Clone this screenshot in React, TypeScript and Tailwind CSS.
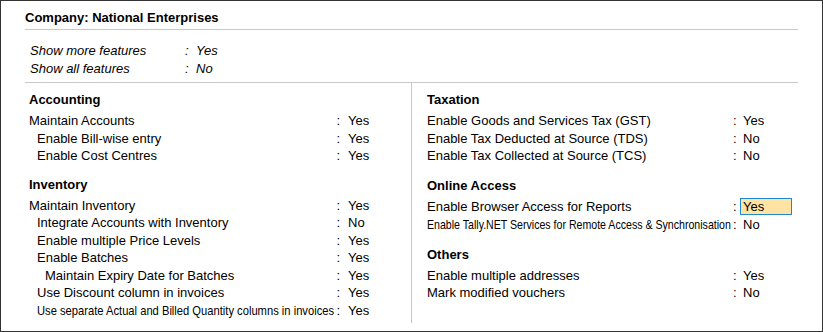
import React from 'react';

type Row = { label: string; value: string; indent?: number; squeeze?: string; active?: boolean };
type Section = { title: string; rows: Row[] };

const LEFT: Section[] = [
  {
    title: 'Accounting',
    rows: [
      { label: 'Maintain Accounts', value: 'Yes' },
      { label: 'Enable Bill-wise entry', value: 'Yes', indent: 1 },
      { label: 'Enable Cost Centres', value: 'Yes', indent: 1 },
    ],
  },
  {
    title: 'Inventory',
    rows: [
      { label: 'Maintain Inventory', value: 'Yes' },
      { label: 'Integrate Accounts with Inventory', value: 'No', indent: 1 },
      { label: 'Enable multiple Price Levels', value: 'Yes', indent: 1 },
      { label: 'Enable Batches', value: 'Yes', indent: 1 },
      { label: 'Maintain Expiry Date for Batches', value: 'Yes', indent: 2 },
      { label: 'Use Discount column in invoices', value: 'Yes', indent: 1 },
      // texto comprido: condensado como no Tally
      { label: 'Use separate Actual and Billed Quantity columns in invoices', value: 'Yes', indent: 1, squeeze: 'scale-x-[0.86]' },
    ],
  },
];

const RIGHT: Section[] = [
  {
    title: 'Taxation',
    rows: [
      { label: 'Enable Goods and Services Tax (GST)', value: 'Yes' },
      { label: 'Enable Tax Deducted at Source (TDS)', value: 'No' },
      { label: 'Enable Tax Collected at Source (TCS)', value: 'No' },
    ],
  },
  {
    title: 'Online Access',
    rows: [
      { label: 'Enable Browser Access for Reports', value: 'Yes', active: true },
      { label: 'Enable Tally.NET Services for Remote Access & Synchronisation', value: 'No', squeeze: 'scale-x-[0.815]' },
    ],
  },
  {
    title: 'Others',
    rows: [
      { label: 'Enable multiple addresses', value: 'Yes' },
      { label: 'Mark modified vouchers', value: 'No' },
    ],
  },
];

const indentClass = (n?: number) => (n === 2 ? 'pl-[16px]' : n === 1 ? 'pl-[8px]' : '');

const FeatureRow: React.FC<{ row: Row; labelW: string; colonW: string }> = ({ row, labelW, colonW }) => (
  <div className={`flex items-center ${row.active ? 'h-[18.5px]' : 'h-[17.5px] leading-[17.5px]'}`}>
    <div className={`${labelW} shrink-0 whitespace-nowrap ${indentClass(row.indent)}`}>
      {row.squeeze ? (
        <span className={`inline-block origin-left ${row.squeeze}`}>{row.label}</span>
      ) : (
        row.label
      )}
    </div>
    <div className={`${colonW} shrink-0`}>:</div>
    {row.active ? (
      <div className="h-[17px] w-[52px] border border-[#1e88d0] bg-[#ffe3a5] pl-[2px] leading-[15px]">{row.value}</div>
    ) : (
      <div className="pl-[3px]">{row.value}</div>
    )}
  </div>
);

const SectionBlock: React.FC<{ section: Section; first: boolean; labelW: string; colonW: string; gap: string }> = ({
  section,
  first,
  labelW,
  colonW,
  gap,
}) => (
  <div className={first ? '' : gap}>
    <div className="mb-[3.5px] font-bold leading-[17.5px]">{section.title}</div>
    {section.rows.map((r) => (
      <FeatureRow key={r.label} row={r} labelW={labelW} colonW={colonW} />
    ))}
  </div>
);

export default function App() {
  return (
    <div
      className="box-border h-[332px] w-[823px] border border-[#333333] bg-white text-[13px] text-black"
      style={{ fontFamily: '"Liberation Sans", Arial, sans-serif' }}
    >
      {/* titulo */}
      <div className="mx-[24px] h-[29px] border-b border-[#c8c8c8] pt-[9px] font-bold leading-[16px]">
        Company: National Enterprises
      </div>

      {/* mostrar mais */}
      <div className="mx-[24px] border-b border-[#c8c8c8] pb-[4px] pt-[12px] italic">
        <div className="flex h-[18px] items-center leading-[18px]">
          <div className="w-[160px] shrink-0 pl-[5px]">Show more features</div>
          <div className="w-[11px] shrink-0">:</div>
          <div>Yes</div>
        </div>
        <div className="flex h-[18px] items-center leading-[18px]">
          <div className="w-[160px] shrink-0 pl-[5px]">Show all features</div>
          <div className="w-[11px] shrink-0">:</div>
          <div>No</div>
        </div>
      </div>

      {/* colunas */}
      <div className="ml-[24px] flex h-[240px]">
        <div className="w-[387px] shrink-0 border-r border-[#c8c8c8] pl-[4px] pt-[8px]">
          {LEFT.map((s, i) => (
            <SectionBlock
              key={s.title}
              section={s}
              first={i === 0}
              labelW="w-[307.5px]"
              colonW="w-[8.5px]"
              gap="mt-[11px]"
            />
          ))}
        </div>
        <div className="flex-1 pl-[15px] pt-[8px]">
          {RIGHT.map((s, i) => (
            <SectionBlock
              key={s.title}
              section={s}
              first={i === 0}
              labelW="w-[306px]"
              colonW="w-[7px]"
              gap="mt-[12px]"
            />
          ))}
        </div>
      </div>
    </div>
  );
}
